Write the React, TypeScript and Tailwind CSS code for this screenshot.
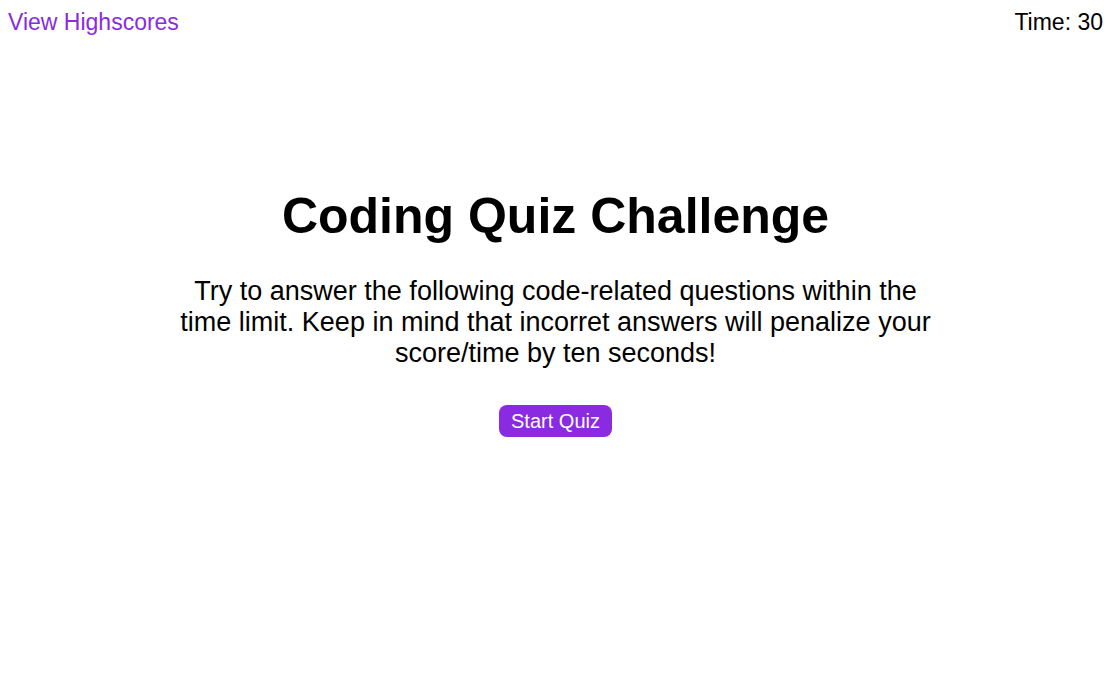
export default function App() {
  return (
    <div className="min-h-screen bg-white text-black font-['Liberation_Sans',Arial,sans-serif]">
      <header className="flex justify-between items-center px-2 pt-[9px]">
        <a href="#" className="text-[23px] leading-[26px] text-[#8a2be2]">
          View Highscores
        </a>
        <p className="text-[23px] leading-[26px]">Time: 30</p>
      </header>
      <main className="flex flex-col items-center text-center mt-[151px]">
        <h1 className="text-[50px] leading-[60px] font-bold">Coding Quiz Challenge</h1>
        <p className="mt-[30px] w-[765px] text-[27px] leading-[31px]">
          Try to answer the following code-related questions within the time limit. Keep in mind that
          incorret answers will penalize your score/time by ten seconds!
        </p>
        <button className="mt-[36px] bg-[#8a2be2] text-white text-[20px] leading-[24px] px-3 py-1 rounded-lg">
          Start Quiz
        </button>
      </main>
    </div>
  )
}
